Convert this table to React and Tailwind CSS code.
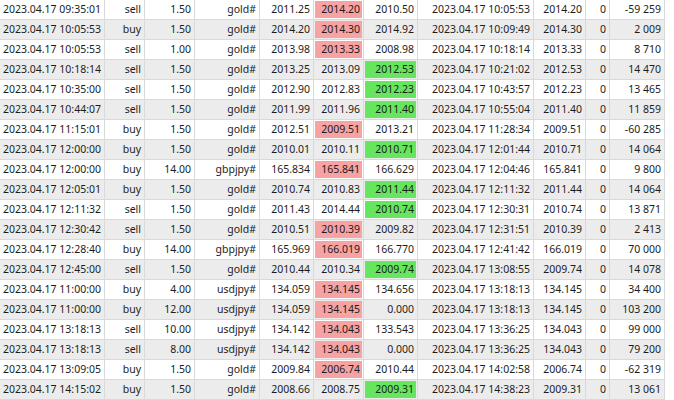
import React from "react";

const rows = [
  ["2023.04.17 09:35:01", "sell", "1.50", "gold#", "2011.25", "2014.20", "2010.50", "2023.04.17 10:05:53", "2014.20", "0", "-59 259", "sl"],
  ["2023.04.17 10:05:53", "buy", "1.50", "gold#", "2014.20", "2014.30", "2014.92", "2023.04.17 10:09:49", "2014.30", "0", "2 009", "sl"],
  ["2023.04.17 10:05:53", "sell", "1.00", "gold#", "2013.98", "2013.33", "2008.98", "2023.04.17 10:18:14", "2013.33", "0", "8 710", "sl"],
  ["2023.04.17 10:18:14", "sell", "1.50", "gold#", "2013.25", "2013.09", "2012.53", "2023.04.17 10:21:02", "2012.53", "0", "14 470", "tp"],
  ["2023.04.17 10:35:00", "sell", "1.50", "gold#", "2012.90", "2012.83", "2012.23", "2023.04.17 10:43:57", "2012.23", "0", "13 465", "tp"],
  ["2023.04.17 10:44:07", "sell", "1.50", "gold#", "2011.99", "2011.96", "2011.40", "2023.04.17 10:55:04", "2011.40", "0", "11 859", "tp"],
  ["2023.04.17 11:15:01", "buy", "1.50", "gold#", "2012.51", "2009.51", "2013.21", "2023.04.17 11:28:34", "2009.51", "0", "-60 285", "sl"],
  ["2023.04.17 12:00:00", "buy", "1.50", "gold#", "2010.01", "2010.11", "2010.71", "2023.04.17 12:01:44", "2010.71", "0", "14 064", "tp"],
  ["2023.04.17 12:00:00", "buy", "14.00", "gbpjpy#", "165.834", "165.841", "166.629", "2023.04.17 12:04:46", "165.841", "0", "9 800", "sl"],
  ["2023.04.17 12:05:01", "buy", "1.50", "gold#", "2010.74", "2010.83", "2011.44", "2023.04.17 12:11:32", "2011.44", "0", "14 064", "tp"],
  ["2023.04.17 12:11:32", "sell", "1.50", "gold#", "2011.43", "2014.44", "2010.74", "2023.04.17 12:30:31", "2010.74", "0", "13 871", "tp"],
  ["2023.04.17 12:30:42", "sell", "1.50", "gold#", "2010.51", "2010.39", "2009.82", "2023.04.17 12:31:51", "2010.39", "0", "2 413", "sl"],
  ["2023.04.17 12:28:40", "buy", "14.00", "gbpjpy#", "165.969", "166.019", "166.770", "2023.04.17 12:41:42", "166.019", "0", "70 000", "sl"],
  ["2023.04.17 12:45:00", "sell", "1.50", "gold#", "2010.44", "2010.34", "2009.74", "2023.04.17 13:08:55", "2009.74", "0", "14 078", "tp"],
  ["2023.04.17 11:00:00", "buy", "4.00", "usdjpy#", "134.059", "134.145", "134.656", "2023.04.17 13:18:13", "134.145", "0", "34 400", "sl"],
  ["2023.04.17 11:00:00", "buy", "12.00", "usdjpy#", "134.059", "134.145", "0.000", "2023.04.17 13:18:13", "134.145", "0", "103 200", "sl"],
  ["2023.04.17 13:18:13", "sell", "10.00", "usdjpy#", "134.142", "134.043", "133.543", "2023.04.17 13:36:25", "134.043", "0", "99 000", "sl"],
  ["2023.04.17 13:18:13", "sell", "8.00", "usdjpy#", "134.142", "134.043", "0.000", "2023.04.17 13:36:25", "134.043", "0", "79 200", "sl"],
  ["2023.04.17 13:09:05", "buy", "1.50", "gold#", "2009.84", "2006.74", "2010.44", "2023.04.17 14:02:58", "2006.74", "0", "-62 319", "sl"],
  ["2023.04.17 14:15:02", "buy", "1.50", "gold#", "2008.66", "2008.75", "2009.31", "2023.04.17 14:38:23", "2009.31", "0", "13 061", "tp"],
];

function Cell({ children, hit }) {
  // hit: "sl" pink, "tp" green, otherwise plain
  return (
    <div className="h-[20px] border-r border-b border-[#d9d9d9] p-px">
      <div
        className={
          "h-full flex items-center justify-end pr-[2px] " +
          (hit === "sl" ? "bg-[#f7a3a3]" : hit === "tp" ? "bg-[#66e65e]" : "")
        }
      >
        {children}
      </div>
    </div>
  );
}

export default function App() {
  return (
    <div
      className="w-[674px] h-[400px] overflow-hidden bg-white text-[10.5px] text-[#1c1c1c]"
      style={{ fontFamily: '"Noto Sans", "Open Sans", sans-serif' }}
    >
      <div className="grid w-[665px] grid-cols-[105px_40px_50px_65px_54px_50px_54px_116px_52px_24px_55px]">
        {rows.map((r, i) => (
          <div key={i} className={"contents " + (i % 2 ? "[&>div]:bg-[#ececec]" : "[&>div]:bg-white")}>
            {r.slice(0, 11).map((v, j) => (
              <Cell
                key={j}
                hit={(j === 5 && r[11] === "sl") || (j === 6 && r[11] === "tp") ? r[11] : null}
              >
                {v}
              </Cell>
            ))}
          </div>
        ))}
      </div>
    </div>
  );
}
